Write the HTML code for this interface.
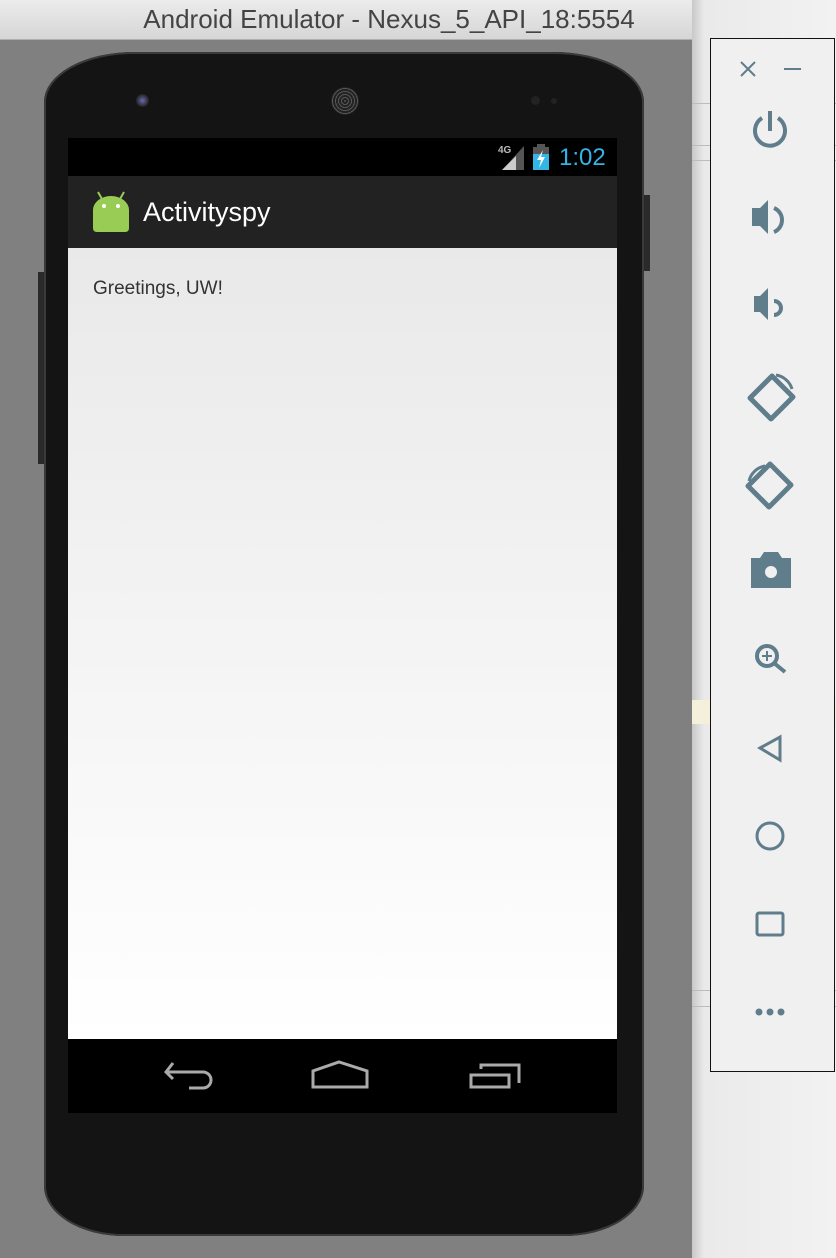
<!DOCTYPE html>
<html><head><style>
*{margin:0;padding:0;box-sizing:border-box}
body{width:836px;height:1258px;position:relative;overflow:hidden;background:#808080;font-family:"Liberation Sans",sans-serif}
.title{position:absolute;left:0;top:0;width:692px;height:40px;background:linear-gradient(#ececec,#d6d6d6);border-bottom:1px solid #b0b0b0;text-align:center;font-size:26px;line-height:38px;color:#444;padding-left:86px}
.right{position:absolute;left:692px;top:0;width:144px;height:1258px;background:linear-gradient(90deg,#c8c8c8,#eaeaea 12px,#f2f2f2)}
.right .l{position:absolute;left:0;width:144px;height:1px;background:#bcbcbc}
.panel{position:absolute;left:710px;top:38px;width:125px;height:1034px;background:#f0f0f0;border:1px solid #111}
.phone{position:absolute;left:44px;top:52px;width:600px;height:1184px;background:#141414;border-radius:90px 90px 80px 80px/50px 50px 50px 50px;box-shadow:0 0 0 2px #3a3a3a inset}
.btn{position:absolute;background:#2a2a2a}
.screen{position:absolute;left:68px;top:138px;width:549px;height:975px;background:#000}
.status{position:absolute;left:0;top:0;width:549px;height:38px;background:#000}
.abar{position:absolute;left:0;top:38px;width:549px;height:72px;background:#222}
.content{position:absolute;left:0;top:110px;width:549px;height:791px;background:linear-gradient(#e9e9e9,#fff)}
.nav{position:absolute;left:0;top:901px;width:549px;height:74px;background:#000}
svg{position:absolute}
</style></head><body>
<div class="title">Android Emulator - Nexus_5_API_18:5554</div>
<div class="right">
<div class="l" style="top:103px"></div><div class="l" style="top:145px"></div><div class="l" style="top:160px"></div><div class="l" style="top:990px"></div><div class="l" style="top:1006px"></div>
<div style="position:absolute;left:0;top:700px;width:144px;height:24px;background:#f5f0dc"></div>
</div>
<div class="panel"></div>
<div class="btn" style="left:643px;top:195px;width:7px;height:76px"></div>
<div class="btn" style="left:38px;top:272px;width:7px;height:192px"></div>
<div class="phone"></div>
<div style="position:absolute;left:136px;top:94px;width:13px;height:13px;border-radius:50%;background:radial-gradient(#6a6aa8,#222 70%)"></div>
<div style="position:absolute;left:331px;top:87px;width:28px;height:28px;border-radius:50%;background:repeating-radial-gradient(#555 0 1px,#222 1px 3px)"></div>
<div style="position:absolute;left:531px;top:96px;width:9px;height:9px;border-radius:50%;background:#222"></div>
<div style="position:absolute;left:551px;top:98px;width:6px;height:6px;border-radius:50%;background:#222"></div>
<div class="screen">
<div class="status">
<div style="position:absolute;left:430px;top:7px;color:#bbb;font-size:10px;font-weight:bold">4G</div>
<svg style="left:434px;top:8px" width="22" height="24"><polygon points="22,0 22,24 0,24" fill="#555"/><polygon points="14,10 14,24 0,24" fill="#ccc"/></svg>
<svg style="left:465px;top:6px" width="16" height="26"><rect x="4" y="0" width="8" height="3" fill="#555"/><rect x="0" y="3" width="16" height="23" fill="#555"/><rect x="0" y="10" width="16" height="16" fill="#33b5e5"/><polygon points="10,6 4,16 8,16 6,24 12,13 8,13" fill="#fff"/></svg>
<div style="position:absolute;left:491px;top:6px;color:#33b5e5;font-size:24px">1:02</div>
</div>
<div class="abar">
<svg style="left:22px;top:14px" width="42" height="42"><line x1="8" y1="2" x2="12" y2="9" stroke="#9c5" stroke-width="2"/><line x1="34" y1="2" x2="30" y2="9" stroke="#9c5" stroke-width="2"/><path d="M3 20 A18 14 0 0 1 39 20 L39 38 Q39 42 35 42 L7 42 Q3 42 3 38Z" fill="#9c5"/><circle cx="14" cy="16" r="2" fill="#fff"/><circle cx="28" cy="16" r="2" fill="#fff"/></svg>
<div style="position:absolute;left:75px;top:21px;color:#fff;font-size:27px">Activityspy</div>
</div>
<div class="content"><div style="position:absolute;left:25px;top:30px;font-size:19px;color:#333">Greetings, UW!</div></div>
<div class="nav">
<svg style="left:95px;top:20px" width="380" height="36" fill="none" stroke="#aaa" stroke-width="3">
<path d="M10 4 L3 13 L10 20 M3 13 H40 A8 8 0 0 1 40 29 H26"/>
<path d="M150 28 V12 L176 3 L204 12 V28 Z"/>
<path d="M308 16 H346 V28 H308 Z M318 10 V6 H356 V24"/>
</svg>
</div>
</div>
<svg style="left:710px;top:38px" width="125" height="1034" fill="#607d8b" stroke="#607d8b">
<path d="M31 24 L45 38 M45 24 L31 38" stroke-width="2" fill="none"/>
<path d="M74 31 H91" stroke-width="2"/>
<path d="M60 73 V93 M52 80 A15 15 0 1 0 68 80" stroke-width="4" fill="none"/>
<path d="M42 170 H50 L58 162 V196 L50 188 H42Z" stroke="none"/><path d="M64 170 A13 13 0 0 1 64 194" stroke-width="4" fill="none"/>
<path d="M44 258 H50 L58 250 V282 L50 274 H44Z" stroke="none"/><path d="M64 263 A7 7 0 0 1 64 277" stroke-width="4" fill="none"/>
<path d="M40 360 L62 338 L83 359 L61 381Z" stroke-width="5" fill="none" stroke-linejoin="round"/><path d="M66 337 A20 20 0 0 1 82 351" stroke-width="3" fill="none"/>
<path d="M38 448 L60 426 L81 447 L59 469Z" stroke-width="5" fill="none" stroke-linejoin="round"/><path d="M39 443 A20 20 0 0 1 55 428" stroke-width="3" fill="none"/>
<path d="M41 520 H50 L54 514 H68 L72 520 H81 V550 H41Z" stroke="none"/><circle cx="61" cy="534" r="6" fill="#f0f0f0" stroke="none"/>
<circle cx="57" cy="618" r="10" stroke-width="4" fill="none"/><path d="M64 625 L75 634" stroke-width="4"/><path d="M52 618 H62 M57 613 V623" stroke-width="2"/>
<path d="M50 710 L70 699 V722 Z" stroke-width="3" fill="none"/>
<circle cx="60" cy="798" r="13" stroke-width="3" fill="none"/>
<rect x="47" y="875" width="26" height="22" rx="2" stroke-width="3" fill="none"/>
<circle cx="49" cy="974" r="3.5" stroke="none"/><circle cx="60" cy="974" r="3.5" stroke="none"/><circle cx="71" cy="974" r="3.5" stroke="none"/>
</svg>
</body></html>
